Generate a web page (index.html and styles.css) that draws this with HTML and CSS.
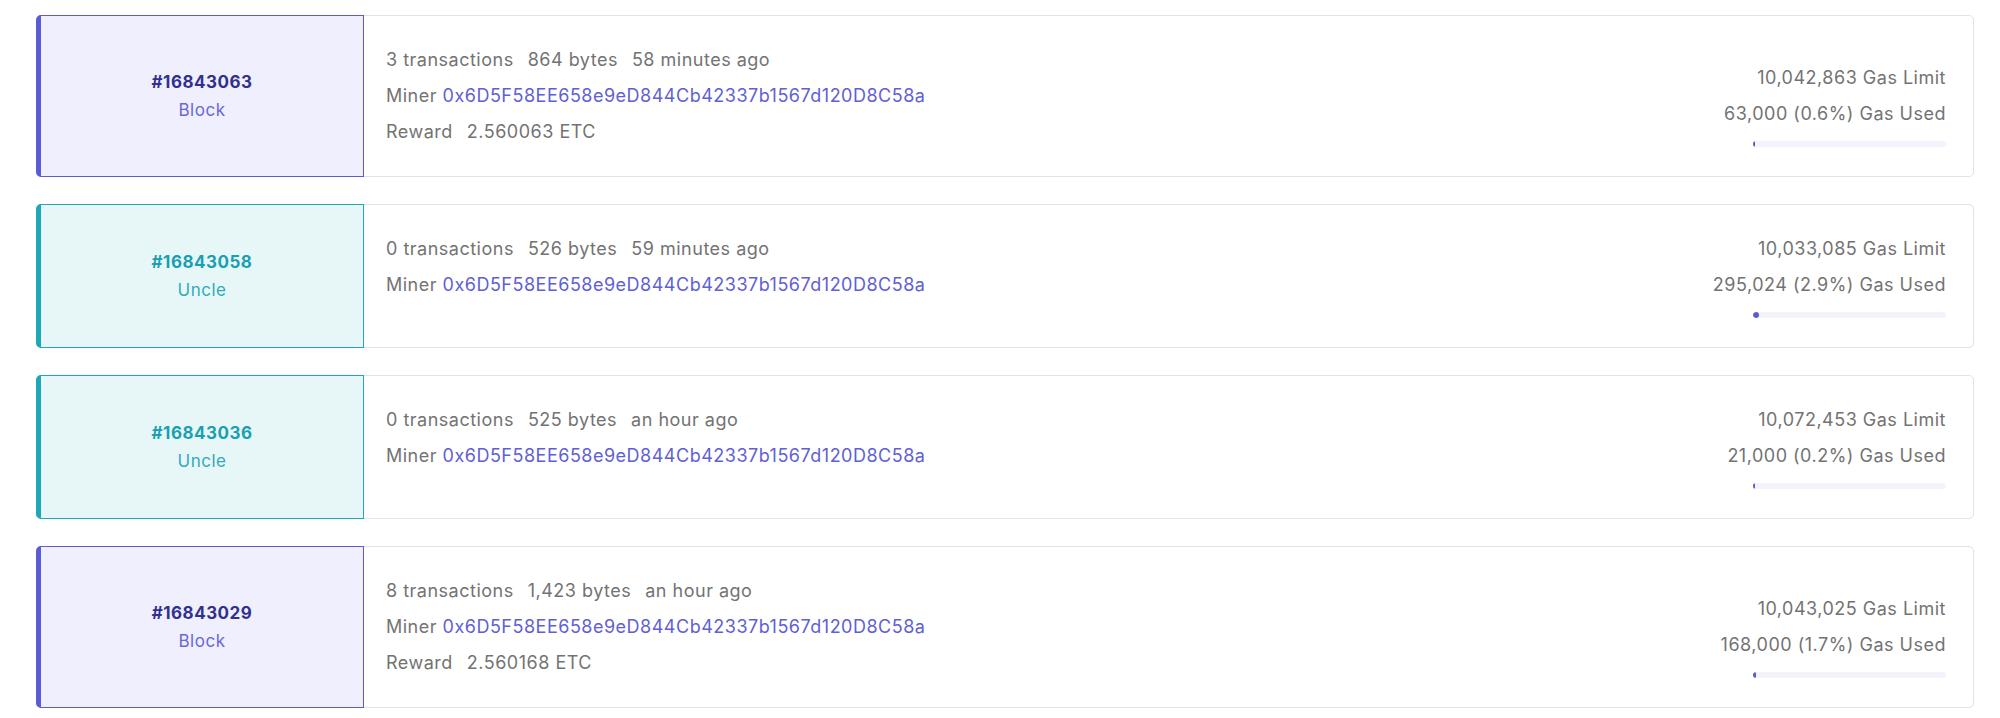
FILE: index.html
```html
<!DOCTYPE html>
<html>
<head>
<meta charset="utf-8">
<link rel="stylesheet" href="styles.css">
</head>
<body>
<div class="list">
  <div class="card">
    <div class="tag tag-block">
      <div class="num">#16843063</div>
      <div class="kind">Block</div>
    </div>
    <div class="body">
      <div class="info">
        <div class="line"><span>3 transactions</span><span>864 bytes</span><span>58 minutes ago</span></div>
        <div class="line"><span>Miner <a class="addr">0x6D5F58EE658e9eD844Cb42337b1567d120D8C58a</a></span></div>
        <div class="line"><span>Reward</span><span>2.560063 ETC</span></div>
      </div>
      <div class="gas">
        <div class="gline">10,042,863 Gas Limit</div>
        <div class="gline">63,000 (0.6%) Gas Used</div>
        <div class="bar"><div class="fill" style="width:0.6%"></div></div>
      </div>
    </div>
  </div>

  <div class="card">
    <div class="tag tag-uncle">
      <div class="num">#16843058</div>
      <div class="kind">Uncle</div>
    </div>
    <div class="body">
      <div class="info">
        <div class="line"><span>0 transactions</span><span>526 bytes</span><span>59 minutes ago</span></div>
        <div class="line"><span>Miner <a class="addr">0x6D5F58EE658e9eD844Cb42337b1567d120D8C58a</a></span></div>
      </div>
      <div class="gas">
        <div class="gline">10,033,085 Gas Limit</div>
        <div class="gline">295,024 (2.9%) Gas Used</div>
        <div class="bar"><div class="fill" style="width:2.9%"></div></div>
      </div>
    </div>
  </div>

  <div class="card">
    <div class="tag tag-uncle">
      <div class="num">#16843036</div>
      <div class="kind">Uncle</div>
    </div>
    <div class="body">
      <div class="info">
        <div class="line"><span>0 transactions</span><span>525 bytes</span><span>an hour ago</span></div>
        <div class="line"><span>Miner <a class="addr">0x6D5F58EE658e9eD844Cb42337b1567d120D8C58a</a></span></div>
      </div>
      <div class="gas">
        <div class="gline">10,072,453 Gas Limit</div>
        <div class="gline">21,000 (0.2%) Gas Used</div>
        <div class="bar"><div class="fill" style="width:0.2%"></div></div>
      </div>
    </div>
  </div>

  <div class="card">
    <div class="tag tag-block">
      <div class="num">#16843029</div>
      <div class="kind">Block</div>
    </div>
    <div class="body">
      <div class="info">
        <div class="line"><span>8 transactions</span><span>1,423 bytes</span><span>an hour ago</span></div>
        <div class="line"><span>Miner <a class="addr">0x6D5F58EE658e9eD844Cb42337b1567d120D8C58a</a></span></div>
        <div class="line"><span>Reward</span><span>2.560168 ETC</span></div>
      </div>
      <div class="gas">
        <div class="gline">10,043,025 Gas Limit</div>
        <div class="gline">168,000 (1.7%) Gas Used</div>
        <div class="bar"><div class="fill" style="width:1.7%"></div></div>
      </div>
    </div>
  </div>
</div>
</body>
</html>
```

FILE: styles.css
```css
* { box-sizing: border-box; }
html, body { margin: 0; padding: 0; background: #ffffff; }
body {
  font-family: "Inter", "Open Sans", sans-serif;
  font-size: 18px;
  letter-spacing: 0.5px;
  color: #737373;
}
.list {
  display: flex;
  flex-direction: column;
  gap: 27px;
  padding: 15px 26px 0 36px;
}
.card {
  display: flex;
  border: 1px solid #e2e2e8;
  border-radius: 5px;
  background: #fff;
}
.tag {
  width: 328px;
  flex: none;
  margin: -1px 0 -1px -1px;
  display: flex;
  flex-direction: column;
  align-items: center;
  justify-content: center;
  border: 1px solid;
  border-left-width: 5px;
  border-radius: 5px 0 0 5px;
  font-size: 17px;
  line-height: 28px;
}
.tag-block { background: #efeffd; border-color: #5b5bd6; }
.tag-block .num { color: #30308f; }
.tag-block .kind { color: #6868d8; }
.tag-uncle { background: #e7f7f8; border-color: #1ea7b7; }
.tag-uncle .num { color: #1a9fb1; }
.tag-uncle .kind { color: #33aabb; }
.num { font-weight: 700; }
.body {
  flex: 1;
  display: flex;
  justify-content: space-between;
  padding: 26px 27px 26px 22px;
}
.info { display: flex; flex-direction: column; }
.line {
  display: flex;
  gap: 14px;
  line-height: 36px;
  white-space: nowrap;
}
.addr { color: #6060d6; text-decoration: none; }
.gas {
  align-self: flex-end;
  display: flex;
  flex-direction: column;
  align-items: flex-end;
}
.gline { line-height: 36px; white-space: nowrap; }
.bar {
  width: 193px;
  height: 6px;
  margin: 9px 0 3px;
  background: #f3f3fb;
  border-radius: 3px;
  overflow: hidden;
}
.fill {
  height: 100%;
  min-width: 2px;
  background: #5b5bd6;
  border-radius: 3px;
}
```
